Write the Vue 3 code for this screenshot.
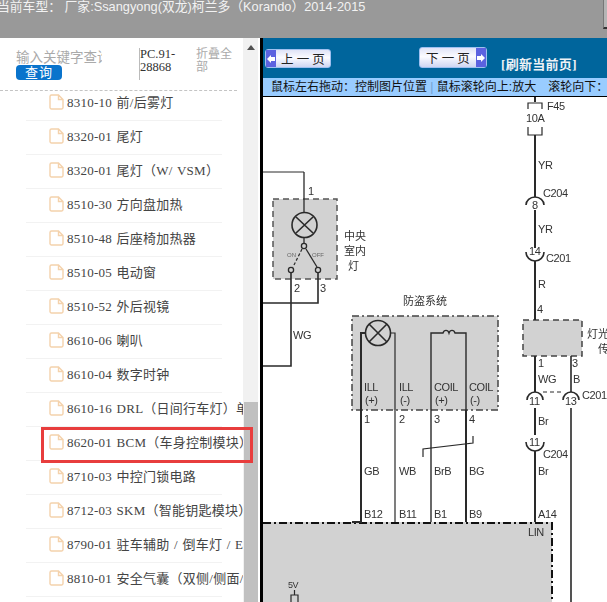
<script setup>
const rows = [
  '8310-10 前/后雾灯',
  '8320-01 尾灯',
  '8320-01 尾灯（W/ VSM）',
  '8510-30 方向盘加热',
  '8510-48 后座椅加热器',
  '8510-05 电动窗',
  '8510-52 外后视镜',
  '8610-06 喇叭',
  '8610-04 数字时钟',
  '8610-16 DRL（日间行车灯）单元',
  '8620-01 BCM（车身控制模块）',
  '8710-03 中控门锁电路',
  '8712-03 SKM（智能钥匙模块）',
  '8790-01 驻车辅助 / 倒车灯 / ECM',
  '8810-01 安全气囊（双侧/侧面/'
]
</script>

<template>
  <div class="page">
    <header class="topbar">
      当前车型： 厂家:Ssangyong(双龙)柯兰多（Korando）2014-2015
      <span class="corner"></span>
    </header>
    <div class="main">
      <aside class="side">
        <div class="side-body">
          <div class="tools">
            <div class="search">
              <div class="search-input">输入关键字查询</div>
              <div class="search-btn">查询</div>
            </div>
            <div class="code">PC.91-<br />28868</div>
            <div class="fold">折叠全部</div>
          </div>
          <ul class="list">
            <li v-for="r in rows" :key="r" class="row">
              <svg class="doc" width="15" height="16" viewBox="0 0 15 16">
                <path d="M1 2.5A1.5 1.5 0 0 1 2.5 1h7l4.500 4.500v8A1.500 1.500 0 0 1 12.500 15h-10A1.500 1.500 0 0 1 1 13.500z M9.500 1v4.500h4.500" fill="none" stroke="#f4d2ac" stroke-width="1.400" />
              </svg>
              <span class="label">{{ r }}</span>
            </li>
          </ul>
        </div>
        <div class="scrollbar">
          <span class="arrow"></span>
          <span class="thumb"></span>
        </div>
        <div class="marker"></div>
      </aside>
      <section class="viewer">
        <div class="nav">
          <div class="btn prev">
            <span class="cap"><svg width="8" height="10" viewBox="0 0 8 10"><path d="M0 5L4 1V3H8V7H4V9z" fill="#fff" /></svg></span>
            <span class="btn-text">上 一 页</span>
          </div>
          <div class="btn next">
            <span class="btn-text">下 一 页</span>
            <span class="cap"><svg width="8" height="10" viewBox="0 0 8 10"><path d="M8 5L4 1V3H0V7H4V9z" fill="#fff" /></svg></span>
          </div>
          <div class="refresh">[刷新当前页]</div>
        </div>
        <div class="hint">鼠标左右拖动：控制图片位置 <span class="pipe">|</span> 鼠标滚轮向上:放大　滚轮向下：缩小</div>
        <div class="canvas">
          <svg class="diagram" width="344" height="505" viewBox="263 97 344 505">
            <rect x="273" y="199" width="64" height="80" fill="#d2d2d2" stroke="#555" stroke-width="1.500" stroke-dasharray="6 4" />
            <rect x="352" y="316" width="146" height="94" fill="#d2d2d2" stroke="#444" stroke-width="1.500" stroke-dasharray="7 3 2 3" />
            <rect x="523" y="320" width="59" height="36" fill="#d2d2d2" stroke="#444" stroke-width="1.500" stroke-dasharray="6 4" />
            <path d="M263 522H552V602H263z" fill="#d2d2d2" />
            <path d="M263 523H552V602" fill="none" stroke="#111" stroke-width="2" stroke-dasharray="8 3 2 3" />
            <g class="wire">
              <path d="M535 97V102M535 135V197M535 210V248M535 261V320M535 356V392M535 408V435M535 451V522" stroke-width="2" />
              <path d="M528 109V103H542V109M528 127V135H542V127" stroke-width="1.200" />
              <path d="M526 205a9 8 0 0 1 18 0" stroke-width="1.600" />
              <path d="M526 252a9 9 0 0 0 18 0" stroke-width="1.600" />
              <path d="M527 400a8 8 0 0 1 16 0" stroke-width="1.600" />
              <path d="M563 400a8 8 0 0 1 16 0" stroke-width="1.600" />
              <path d="M543 392H563" stroke-width="1" stroke-dasharray="4 3" />
              <path d="M526 442a9 9 0 0 0 18 0" stroke-width="1.600" />
              <path d="M571 356V392M571 408V602" stroke-width="1.600" />
              <path d="M304 172V213" stroke-width="1.300" />
              <path d="M263 172H304" stroke-width="1" stroke="#666" />
              <circle cx="304.500" cy="225" r="12.500" stroke-width="1.600" />
              <path d="M296 217L313 233M313 217L296 233" stroke-width="1.600" />
              <path d="M304 237V243" stroke-width="1.300" />
              <circle cx="304" cy="246" r="2.600" stroke-width="1.300" />
              <circle cx="291" cy="270" r="2.600" stroke-width="1.300" />
              <circle cx="318" cy="270" r="2.600" stroke-width="1.300" />
              <path d="M306 249L317 267" stroke-width="1.300" />
              <path d="M302 249L293 267" stroke-width="1.200" stroke-dasharray="3 2" />
              <path d="M291 273V366H263M318 273V303H263" stroke-width="1.600" />
              <circle cx="378" cy="333" r="12.500" stroke-width="1.600" />
              <path d="M369 324L387 342M387 324L369 342" stroke-width="1.600" />
              <path d="M365.500 333H361V522H352" stroke-width="2" />
              <path d="M390.500 333H395V522" stroke-width="1.200" />
              <path d="M431 522V333H443a3.200 4 0 0 1 6 0a3.200 4 0 0 1 6 0H466V522" stroke-width="1.400" />
              <path d="M466 410V522" stroke-width="2" />
              <path d="M423 457V449L473 443V436" stroke-width="1.200" />
            </g>
            <g class="txt">
              <text x="287" y="257" class="tiny">ON</text>
              <text x="312" y="257" class="tiny">OFF</text>
              <text x="308" y="195">1</text>
              <text x="344" y="240" class="cn">中央</text>
              <text x="344" y="255" class="cn">室内</text>
              <text x="348" y="270" class="cn">灯</text>
              <text x="294" y="292">2</text>
              <text x="320" y="292">3</text>
              <text x="293" y="339">WG</text>
              <text x="403" y="305" class="cn">防盗系统</text>
              <text x="364" y="391">ILL</text><text x="365" y="404">(+)</text>
              <text x="399" y="391">ILL</text><text x="400" y="404">(-)</text>
              <text x="434" y="391">COIL</text><text x="435" y="404">(+)</text>
              <text x="469" y="391">COIL</text><text x="470" y="404">(-)</text>
              <text x="364" y="423">1</text><text x="399" y="423">2</text><text x="434" y="423">3</text><text x="469" y="423">4</text>
              <text x="364" y="475">GB</text><text x="399" y="475">WB</text><text x="434" y="475">BrB</text><text x="469" y="475">BG</text>
              <text x="364" y="518">B12</text><text x="399" y="518">B11</text><text x="434" y="518">B1</text><text x="469" y="518">B9</text>
              <text x="547" y="110">F45</text>
              <text x="526" y="122">10A</text>
              <text x="538" y="169">YR</text>
              <text x="543" y="197">C204</text>
              <text x="532" y="209">8</text>
              <text x="538" y="233">YR</text>
              <text x="529" y="255">14</text>
              <text x="546" y="262">C201</text>
              <text x="538" y="288">R</text>
              <text x="537" y="313">4</text>
              <text x="587" y="338" class="cn">灯光</text>
              <text x="598" y="353" class="cn">传</text>
              <text x="538" y="367">1</text>
              <text x="572" y="367">3</text>
              <text x="538" y="383">WG</text>
              <text x="573" y="383">B</text>
              <text x="529" y="405">11</text>
              <text x="565" y="405">13</text>
              <text x="582" y="399">C201</text>
              <text x="538" y="425">Br</text>
              <text x="529" y="446">11</text>
              <text x="543" y="458">C204</text>
              <text x="538" y="475">Br</text>
              <text x="538" y="518">A14</text>
              <text x="528" y="536">LIN</text>
              <text x="288" y="588" class="small">5V</text>
            </g>
            <path d="M294.500 590V595M291 602V595H298V602" class="wire" stroke-width="1.200" />
          </svg>
        </div>
      </section>
    </div>
  </div>
</template>

<style>
html, body { margin: 0; padding: 0; overflow: hidden; background: #fff; }
</style>

<style scoped>
.page { width: 607px; height: 602px; display: flex; flex-direction: column; overflow: hidden; font-family: "Liberation Sans", "Noto Sans CJK SC", sans-serif; }
.topbar { height: 38px; flex: none; position: relative; background: #999; color: #f2f2f2; font-size: 12.8px; line-height: 13px; white-space: nowrap; text-indent: -3px; overflow: hidden; }
.corner { position: absolute; left: 603px; top: 0; width: 4px; height: 27px; background: #b5b5b5; border-left: 1px solid #777; border-bottom: 2px solid #333; }
.main { flex: 1; display: flex; min-height: 0; }
.side { width: 263px; flex: none; display: flex; position: relative; box-sizing: border-box; border-right: 3px solid #000; }
.side-body { width: 243px; flex: none; overflow: hidden; }
.tools { height: 42px; padding: 10px 0 0 16px; display: flex; border-bottom: 1px dashed #c4c4c4; margin-right: 6px; }
.search { width: 123px; flex: none; }
.search-input { width: 86px; height: 15px; overflow: hidden; font-size: 13.5px; line-height: 16px; white-space: nowrap; margin-top: 2px; color: #aaa; }
.search-btn { width: 46px; height: 15px; border-radius: 4px; background: #0a74cc; color: #fff; font-size: 13px; letter-spacing: 1px; line-height: 15px; text-align: center; }
.code { width: 57px; flex: none; height: 32px; box-sizing: border-box; border-left: 1px solid #bbb; font-family: "Liberation Serif", serif; font-size: 12.5px; line-height: 13px; color: #333; }
.fold { width: 36px; font-size: 12px; line-height: 13px; color: #aaa; }
.list { list-style: none; margin: -4px 0 0; padding: 0 0 0 26px; }
.row { height: 29px; width: 173px; padding: 0 0 4px 23px; display: flex; align-items: center; border-bottom: 1px solid #f2f2f2; white-space: nowrap; }
.doc { flex: none; margin-right: 3px; }
.label { flex: none; font-family: "Liberation Serif", "Noto Sans CJK SC", serif; font-size: 13px; letter-spacing: .25px; word-spacing: 1px; color: #444; }
.scrollbar { width: 15px; flex: none; background: #f1f1f1; position: relative; }
.arrow { position: absolute; left: 4px; top: 7px; border: 4px solid transparent; border-top: 0; border-bottom: 5px solid #505050; }
.thumb { position: absolute; left: 1px; right: 0; top: 364px; bottom: 0; background: #c0c0c0; }
.marker { position: absolute; left: 41px; top: 389px; width: 212px; height: 36px; box-sizing: border-box; border: 3px solid #e83d3d; }
.viewer { flex: 1; min-width: 0; display: flex; flex-direction: column; }
.nav { height: 40px; flex: none; background: #00659c; display: flex; align-items: flex-start; }
.btn { box-sizing: border-box; background: linear-gradient(#dfe3f7, #fbfbff 45%, #cfd6f2); border: 1px solid #9fc0f0; border-radius: 3px; display: flex; align-items: center; }
.btn-text { flex: 1; text-align: center; font-size: 12.5px; color: #222; font-family: "Liberation Serif", "Noto Sans CJK SC", serif; }
.cap { width: 10px; align-self: stretch; background: #5c62e0; display: flex; align-items: center; justify-content: center; }
.prev { width: 66px; height: 19px; margin: 11px 0 0 2px; }
.next { width: 68px; height: 21px; margin: 9px 0 0 88px; }
.refresh { margin: 16px 0 0 14px; color: #eef2f6; font-size: 13px; font-weight: 700; letter-spacing: .3px; font-family: "Liberation Serif", "Noto Sans CJK SC", serif; }
.hint { height: 18px; flex: none; background: #99ccff; border-bottom: 1px solid #000; padding-left: 8px; font-size: 12px; line-height: 18px; color: #111; white-space: nowrap; overflow: hidden; }
.pipe { color: #6f9fd0; }
.canvas { flex: 1; min-height: 0; background: #fff; overflow: hidden; }
.diagram { display: block; filter: blur(.35px); }
.wire, .wire path, .wire circle { fill: none; stroke: #2a2a2a; }
.txt text { font-size: 11px; letter-spacing: -.4px; fill: #333; font-family: "Liberation Sans", sans-serif; }
.txt .cn { font-size: 11px; letter-spacing: 0; font-family: "Noto Sans CJK SC", sans-serif; }
.txt .tiny { font-size: 6px; letter-spacing: 0; fill: #666; }
.txt .small { font-size: 9px; }
</style>
